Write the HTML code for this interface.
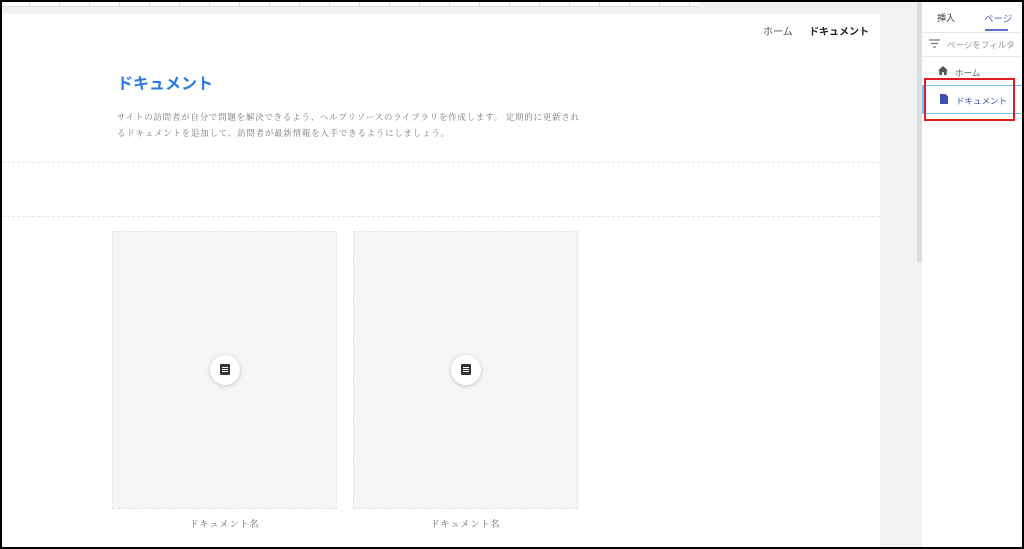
<!DOCTYPE html>
<html><head><meta charset="utf-8"><style>
*{margin:0;padding:0;box-sizing:border-box}
body{width:1024px;height:549px;overflow:hidden;background:#fff;position:relative;font-family:"Liberation Sans","Noto Sans CJK JP",sans-serif}
.abs{position:absolute}
.serif{font-family:"Liberation Serif","Noto Serif CJK SC",serif}
.card{position:absolute;top:231px;width:225px;height:278px;background:#f5f5f5;border:1px dashed #e4e4e4}
.circ{position:absolute;left:97px;top:123px;width:30px;height:30px;border-radius:50%;background:#fff;box-shadow:0 1px 4px rgba(0,0,0,.2)}
.circ i{position:absolute;left:10px;top:9px;width:10px;height:11px;background:#333;border-radius:1px}
.circ i:before{content:"";position:absolute;left:2px;top:3px;width:6px;height:1px;background:#fff;box-shadow:0 2px 0 #fff,0 4px 0 #fff}
.lbl{position:absolute;top:517px;font-size:9px;color:#666;width:225px;text-align:center;letter-spacing:1px}
</style></head><body>
<div class="abs" style="left:0;top:0;width:1024px;height:549px;border:2px solid #000;z-index:10"></div>
<div class="abs" style="left:0;top:0;width:922px;height:549px;background:#f1f2f4"></div>
<div class="abs" style="left:0;top:0;width:700px;height:7px;background:#fff;border-bottom:1px solid #e3e3e3;background-image:repeating-linear-gradient(90deg,transparent 0 29px,#ddd 29px 30px)"></div>
<div class="abs" style="left:2px;top:14px;width:878px;height:535px;background:#fff"></div>
<div class="abs" style="left:917px;top:0;width:5px;height:263px;background:#dcdde0;border-radius:2px"></div>
<div class="abs" style="left:922px;top:0;width:102px;height:549px;background:#fff"></div>
<div class="abs" style="left:763px;top:23px;font-size:10px;color:#555">ホーム</div>
<div class="abs" style="left:809px;top:23px;font-size:10px;color:#222;font-weight:bold">ドキュメント</div>
<div class="abs" style="left:117px;top:70px;font-size:16px;color:#2d7be5;font-weight:bold">ドキュメント</div>
<div class="abs serif" style="left:117px;top:109px;font-size:8.5px;color:#777;line-height:16px;width:470px;letter-spacing:.75px">サイトの訪問者が自分で問題を解決できるよう、ヘルプリソースのライブラリを作成します。 定期的に更新されるドキュメントを追加して、訪問者が最新情報を入手できるようにしましょう。</div>
<div class="abs" style="left:2px;top:162px;width:878px;border-top:1px dashed #e6e6e6"></div>
<div class="abs" style="left:2px;top:216px;width:878px;border-top:1px dashed #e6e6e6"></div>
<div class="card" style="left:112px"><div class="circ"><i></i></div></div>
<div class="card" style="left:353px"><div class="circ"><i></i></div></div>
<div class="lbl serif" style="left:112px">ドキュメント名</div>
<div class="lbl serif" style="left:353px">ドキュメント名</div>
<div class="abs" style="left:937px;top:11px;font-size:9px;color:#444">挿入</div>
<div class="abs" style="left:984px;top:11px;font-size:9.5px;color:#5b6bd0">ページ</div>
<div class="abs" style="left:985px;top:29px;width:23px;height:2px;background:#5b6bd0"></div>
<div class="abs" style="left:922px;top:32px;width:100px;border-top:1px solid #e6e6e6"></div>
<svg class="abs" style="left:929px;top:39px" width="12" height="10"><path d="M0 1h11M2 4.5h7M4 8h3" stroke="#777" stroke-width="1.3"/></svg>
<div class="abs" style="left:947px;top:39px;font-size:8.5px;color:#999">ページをフィルタ</div>
<div class="abs" style="left:922px;top:56px;width:100px;border-top:1px solid #e6e6e6"></div>
<svg class="abs" style="left:938px;top:66px" width="10" height="9"><path d="M5 0L0 4.5h1.3V9h2.7V6.3h2V9h2.7V4.5H10z" fill="#555"/></svg>
<div class="abs" style="left:955px;top:67px;font-size:8.5px;color:#666">ホーム</div>
<div class="abs" style="left:922px;top:85px;width:100px;height:29px;border-top:1px solid #6cc6f0;border-bottom:1px solid #6cc6f0;border-left:2px solid #6cc6f0"></div>
<svg class="abs" style="left:940px;top:94px" width="8" height="10"><path d="M0 0h5.5l2.5 2.5V10H0z" fill="#3f4fb5"/></svg>
<div class="abs" style="left:956px;top:95px;font-size:8.5px;color:#3f4fb5">ドキュメント</div>
<div class="abs" style="left:924px;top:78px;width:91px;height:43px;border:2px solid #e21b23"></div>
</body></html>
